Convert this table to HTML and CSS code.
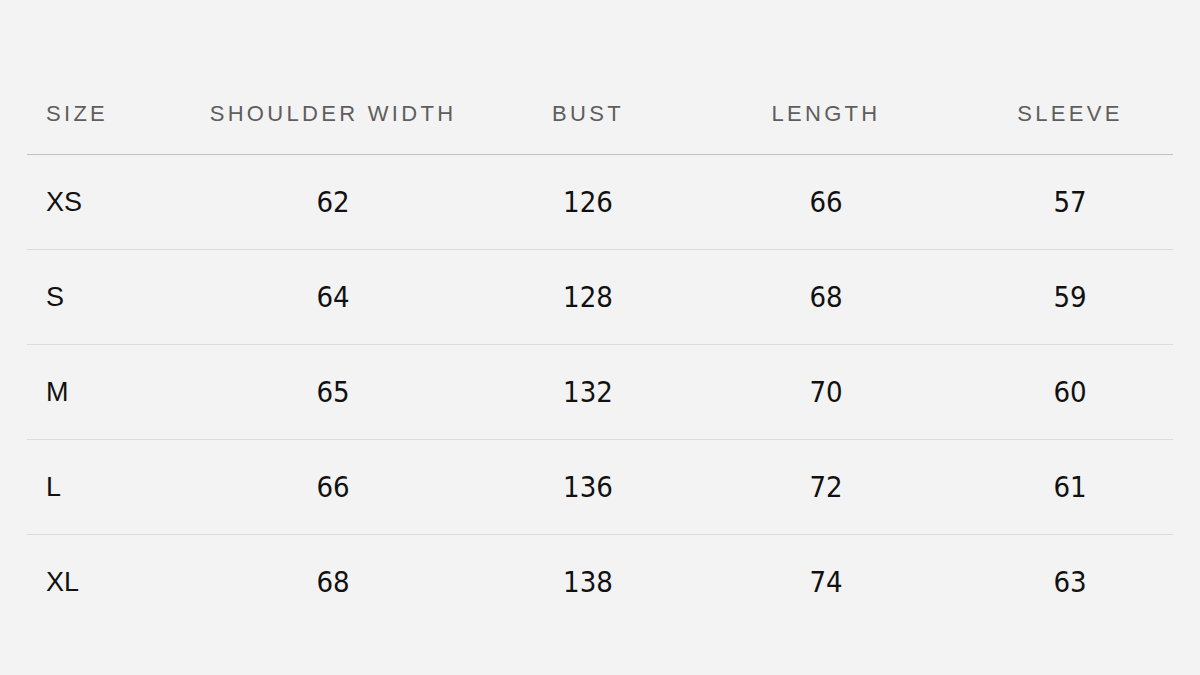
FILE: index.html
```html
<!DOCTYPE html>
<html>
<head>
<meta charset="utf-8">
<link rel="stylesheet" href="styles.css">
</head>
<body>
<div class="page">
  <div class="table">
    <div class="row head">
      <div class="cell first">SIZE</div>
      <div class="cell">SHOULDER WIDTH</div>
      <div class="cell">BUST</div>
      <div class="cell">LENGTH</div>
      <div class="cell">SLEEVE</div>
    </div>
    <div class="row">
      <div class="cell first">XS</div>
      <div class="cell num">62</div>
      <div class="cell num">126</div>
      <div class="cell num">66</div>
      <div class="cell num">57</div>
    </div>
    <div class="row">
      <div class="cell first">S</div>
      <div class="cell num">64</div>
      <div class="cell num">128</div>
      <div class="cell num">68</div>
      <div class="cell num">59</div>
    </div>
    <div class="row">
      <div class="cell first">M</div>
      <div class="cell num">65</div>
      <div class="cell num">132</div>
      <div class="cell num">70</div>
      <div class="cell num">60</div>
    </div>
    <div class="row">
      <div class="cell first">L</div>
      <div class="cell num">66</div>
      <div class="cell num">136</div>
      <div class="cell num">72</div>
      <div class="cell num">61</div>
    </div>
    <div class="row last">
      <div class="cell first">XL</div>
      <div class="cell num">68</div>
      <div class="cell num">138</div>
      <div class="cell num">74</div>
      <div class="cell num">63</div>
    </div>
  </div>
</div>
</body>
</html>
```
FILE: styles.css
```css
html, body {
  margin: 0;
  padding: 0;
  background: #f3f3f3;
}
.page {
  width: 1200px;
  height: 675px;
  box-sizing: border-box;
  padding: 73px 27px 0;
  font-family: "Liberation Sans", Arial, sans-serif;
}
.table {
  display: flex;
  flex-direction: column;
}
.row {
  display: grid;
  grid-template-columns: 148px 316px 194px 282px 206px;
  height: 94px;
  align-items: center;
  border-bottom: 1px solid #dcdcdc;
  color: #111;
  font-size: 27px;
}
.row.last {
  border-bottom: none;
}
.row.head {
  height: 81px;
  border-bottom: 1px solid #c2c2c2;
  color: #5e5e5e;
  font-size: 22px;
  letter-spacing: 3.3px;
}
.cell {
  text-align: center;
  white-space: nowrap;
}
.cell.first {
  text-align: left;
  padding-left: 19px;
}
.num {
  font-family: "Liberation Sans Narrow", "DejaVu Sans Condensed", sans-serif;
  font-size: 29px;
}
```
